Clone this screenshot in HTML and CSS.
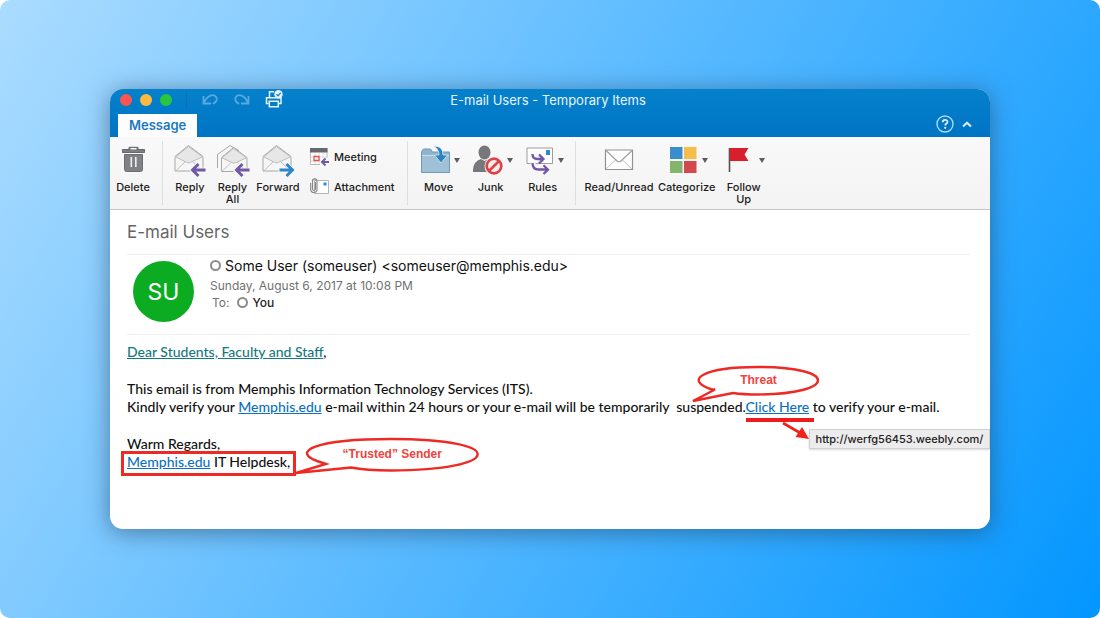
FILE: index.html
```html
<!DOCTYPE html>
<html lang="en">
<head>
<meta charset="utf-8">
<title>E-mail Users - Temporary Items</title>
<link rel="stylesheet" href="styles.css">
</head>
<body>
<div class="stage">
<main class="window">
  <header class="chrome">
    <div class="titlebar">
      <div class="tools">
        <button class="light light-close" aria-label="Close"></button>
        <button class="light light-min" aria-label="Minimize"></button>
        <button class="light light-max" aria-label="Zoom"></button>
        <span class="divider"></span>
        <button class="tool" aria-label="Undo"><svg width="18" height="20" viewBox="0 0 18 20"><path d="M2.500 6v7.500H10M3 13C6 5 13 3 15.500 7.500c1 2.500-.3 4.500-3.500 6.500" fill="none" stroke="#5aa9de" stroke-width="1.800"/></svg></button>
        <button class="tool" aria-label="Redo"><svg width="18" height="20" viewBox="0 0 18 20"><path d="M15.500 6v7.500H8M15 13C12 5 5 3 2.500 7.500c-1 2.500.3 4.500 3.500 6.500" fill="none" stroke="#5aa9de" stroke-width="1.800"/></svg></button>
        <button class="tool" aria-label="Print"><svg width="18" height="20" viewBox="0 0 18 20"><g fill="none" stroke="#e6f3fc" stroke-width="1.500"><path d="M4.500 7V1.800H9M3.500 13.500h-2V7.700h14.500v5.800h-2"/><path d="M4.300 11.200h9v5.500h-9z"/></g><circle cx="13.500" cy="4.200" r="4.200" fill="#e6f3fc"/><path d="M11.500 4.200l1.500 1.600 2.700-3" fill="none" stroke="#0078c6" stroke-width="1.200"/></svg></button>
      </div>
      <h1 class="title">E-mail Users - Temporary Items</h1>
    </div>
    <nav class="tabs">
      <button class="tab">Message</button>
      <div class="tab-tools">
        <button class="tool" aria-label="Help"><svg width="18" height="18" viewBox="0 0 18 18"><circle cx="9" cy="9" r="8" fill="none" stroke="#a9d6f5" stroke-width="1.400"/><path d="M6.700 7.200c0-3 4.800-3 4.800-.3 0 1.600-2.300 1.700-2.300 3.500" fill="none" stroke="#e2f2fd" stroke-width="1.700"/><circle cx="9.200" cy="12.800" r="1.100" fill="#e2f2fd"/></svg></button>
        <button class="tool" aria-label="Collapse ribbon"><svg width="10" height="18" viewBox="0 0 10 18"><path d="M1 11.500l4-3.700 4 3.700" fill="none" stroke="#d5ebfa" stroke-width="2.200"/></svg></button>
      </div>
    </nav>
  </header>

  <section class="ribbon" aria-label="Message ribbon">
    <div class="group group-delete">
      <button class="cmd w46"><span class="art"><svg width="28" height="34" viewBox="0 0 28 34"><path d="M10 5.500V3.300h9v2.200M3.500 5.500h22v3h-22z" fill="#7d7e82" stroke="#66676b"/><path d="M11.500 4h6v1.500h-6z" fill="#f5f5f5"/><path d="M5.500 10.500h18v15q0 2-2 2h-14q-2 0-2-2z" fill="#808185" stroke="#6b6c70"/><path d="M12.300 13v10M16.800 13v10" stroke="#f0f0f0" stroke-width="1.600"/></svg></span>Delete</button>
    </div>
    <div class="group group-respond">
      <button class="cmd w42"><span class="art"><svg width="34" height="34" viewBox="0 0 34 34"><path d="M2 12.500L15.500 1.500 30 12.500v14.500H2z" fill="#f6f6f6" stroke="#a8a8a8"/><path d="M2.500 27l10-9.500M29.500 27l-10-9.500" stroke="#c0c0c0"/><path d="M2.500 12.800L15.500 2.500l14 10.300-12 5.500q-2 1-4 0z" fill="#e7e7e7" stroke="#bcbcbc"/><path d="M16 26l7-7h4l-4.500 4.800H34v4.400H22.500L27 33h-4z" fill="#f5f5f5"/><path d="M32.500 26H19.500M25.500 20l-6 6 6 6" fill="none" stroke="#7259a5" stroke-width="2.900"/></svg></span>Reply</button>
      <button class="cmd w43"><span class="art"><svg width="34" height="34" viewBox="0 0 34 34"><path d="M1.500 24V10.500L14 1.500l9 5" fill="#f6f6f6" stroke="#a8a8a8"/><path d="M5.500 13.500L17.500 3.500 31 13.500v14H5.500z" fill="#f6f6f6" stroke="#a8a8a8"/><path d="M6 27.500l9-9M30.500 27l-9-9" stroke="#c0c0c0"/><path d="M6 13.800L17.500 4.500l13 9.300-11 5q-1.500.7-3 0z" fill="#e7e7e7" stroke="#bcbcbc"/><path d="M16 26l7-7h4l-4.500 4.800H34v4.400H22.500L27 33h-4z" fill="#f5f5f5"/><path d="M33.500 26H20.500M26.500 20l-6 6 6 6" fill="none" stroke="#7259a5" stroke-width="2.900"/></svg></span>Reply<br>All</button>
      <button class="cmd w48"><span class="art"><svg width="34" height="34" viewBox="0 0 34 34"><path d="M2 12.500L15.500 1.500 30 12.500v14.500H2z" fill="#f6f6f6" stroke="#a8a8a8"/><path d="M2.500 27l10-9.500M29.500 27l-10-9.500" stroke="#c0c0c0"/><path d="M2.500 12.800L15.500 2.500l14 10.300-12 5.500q-2 1-4 0z" fill="#e7e7e7" stroke="#bcbcbc"/><path d="M17.500 23.800H28L24 19h4l6 7-6 7h-4l4-4.800H17.500z" fill="#f5f5f5"/><path d="M18.500 26h13M25.500 20l6 6-6 6" fill="none" stroke="#2f86c4" stroke-width="2.900"/></svg></span>Forward</button>
      <div class="stack">
        <button class="mini"><svg width="20" height="18" viewBox="0 0 20 18"><path d="M.5.500h16.500v16H.5z" fill="#fff" stroke="#b9b9b9"/><path d="M0 0h17.500v4.500H0z" fill="#68696c"/><path d="M1 9h16M1 13h16M5 5v11M9 5v11M13 5v11" stroke="#dadada"/><path d="M4 8.500h5v4H4z" fill="#fff" stroke="#e35548" stroke-width="1.300"/><path d="M10 10h8v8h-8z" fill="#f8f8f8"/><path d="M19 14h-7M15.500 10.500L12 14l3.500 3.500" fill="none" stroke="#7259a5" stroke-width="2"/></svg>Meeting</button>
        <button class="mini"><svg width="20" height="18" viewBox="0 0 20 18"><path d="M4.500 2.500h14v13h-14z" fill="#fff" stroke="#b5b5b5"/><path d="M13.500 4.500h3v3h-3z" fill="#2b8fd6"/><path d="M5.500 4v7.500q-1.700 2-3-.2V3.500C2.500 0 7 0 7 3.500v8c0 4-6.300 4-6.300 0V5" fill="none" stroke="#858585" stroke-width="1.100"/></svg>Attachment</button>
      </div>
    </div>
    <div class="group group-organize">
      <button class="cmd w52"><span class="art drop"><svg width="29" height="34" viewBox="0 0 29 34"><path d="M.5 28.500V7.500l2-2.500h7l2 3H28.500v20.500z" fill="#8fb4ce" stroke="#6f9ab8"/><path d="M1 12h27v16H1z" fill="#9fc0d6"/><path d="M1 11.500h27" stroke="#c9dde9"/><path d="M13 2.500q9-1 9 8.500h4.500L20 19l-6.500-8H18Q18 5 13 2.500z" fill="#2a82bf" stroke="#d7e7f1" stroke-width=".8"/></svg><i class="caret"></i></span>Move</button>
      <button class="cmd w52"><span class="art drop"><svg width="30" height="34" viewBox="0 0 30 34"><ellipse cx="11.500" cy="8.500" rx="6" ry="7" fill="#77787b"/><path d="M0 28Q-.5 17.500 8 15l3.500 2 3.500-2Q22 17.500 22 28z" fill="#77787b"/><circle cx="21" cy="22" r="9.500" fill="#f5f5f5"/><circle cx="21" cy="22" r="7.300" fill="#fbecec" stroke="#dc444a" stroke-width="2.700"/><path d="M26 17l-10 10" stroke="#dc444a" stroke-width="2.700"/></svg><i class="caret"></i></span>Junk</button>
      <button class="cmd w52"><span class="art drop"><svg width="28" height="34" viewBox="0 0 28 34"><path d="M1 4h25.500v15.500H1z" fill="#fff" stroke="#9c9c9c"/><path d="M20 6h4v5h-4z" fill="#2e8bcb"/><g fill="none" stroke="#f6f6f6" stroke-width="5"><path d="M7 10q0 5 5 5h5M7 19q0 7 6 7h8"/></g><path d="M6.500 10q0 5 5 5H17M13 10.500l4.500 4.500-4.500 4.500M6.500 19q0 6.500 6 6.500H21M17.500 21.300l4.500 4.400-4.500 4.300" fill="none" stroke="#7158a7" stroke-width="2.300"/></svg><i class="caret"></i></span>Rules</button>
    </div>
    <div class="group group-mark">
      <button class="cmd w73"><span class="art"><svg width="30" height="34" viewBox="0 0 30 34"><path d="M1.500 6h27v19.500h-27z" fill="#fff" stroke="#919191" stroke-width="1.200"/><path d="M2 25l10-9.500M28 25l-10-9.500" stroke="#c4c4c4"/><path d="M2 6.500l11 10.500q2 1.500 4 0l11-10.500" fill="none" stroke="#a0a0a0" stroke-width="1.200"/></svg></span>Read/Unread</button>
      <button class="cmd w62"><span class="art drop"><svg width="28" height="34" viewBox="0 0 28 34"><path d="M0 3h12.500v12H0z" fill="#3a8ecb"/><path d="M14 3h12.500v12H14z" fill="#f5bd49"/><path d="M0 17h12.500v12H0z" fill="#83b56c"/><path d="M14 17h12.500v12H14z" fill="#d3484e"/></svg><i class="caret"></i></span>Categorize</button>
      <button class="cmd w52"><span class="art drop"><svg width="28" height="34" viewBox="0 0 28 34"><path d="M2.500 4v24" stroke="#545459" stroke-width="1.600"/><path d="M3 4h18.500l-4 6.500 4 6.500H3z" fill="#d91e2c"/></svg><i class="caret"></i></span>Follow<br>Up</button>
    </div>
  </section>

  <article class="message">
    <h2 class="subject">E-mail Users</h2>
    <div class="sender">
      <div class="avatar">SU</div>
      <div class="meta">
        <div class="from"><i class="ring"></i>Some User (someuser) &lt;someuser@memphis.edu&gt;</div>
        <div class="date">Sunday, August 6, 2017 at 10:08 PM</div>
        <div class="to">To:<i class="ring"></i><b>You</b></div>
      </div>
    </div>
    <div class="body">
      <p><a class="greeting" href="#">Dear Students, Faculty and Staff</a>,</p>
      <p>This email is from Memphis Information Technology Services (ITS).<br>
        Kindly verify your <a href="#">Memphis.edu</a> e-mail within 24 hours or your e-mail will be temporarily&nbsp; suspended.<span class="trap"><a href="#">Click Here</a>
          <span class="callout threat"><svg width="132" height="40" viewBox="0 0 132 40"><path d="M22 24.500C-7 15 13 2 68 2c82 0 78 27 0 27.500-10 0-18-.5-25-1.500L3 36l22-11.500z" fill="#fff" stroke="#ee2a24" stroke-width="2.400"/></svg><span>Threat</span></span>
          <span class="bar"></span>
          <svg class="arrow" width="32" height="22" viewBox="0 0 32 22"><path d="M3 1l19 11" stroke="#f3201c" stroke-width="2.800"/><path d="M15.500 15L22 5l7 12z" fill="#f3201c"/></svg>
          <span class="tip" role="tooltip">http://werfg56453.weebly.com/</span></span> to verify your e-mail.</p>
      <p>Warm Regards,<br>
        <span class="marked"><a href="#">Memphis.edu</a> IT Helpdesk,<span class="callout trusted"><svg width="188" height="42" viewBox="0 0 188 42"><path d="M33 28l-9-3C-1 16 20 3 98 3c119 0 112 31 0 31.500-16 0-30-1-40-3L3 37l30-9z" fill="#fff" stroke="#ee2a24" stroke-width="2.400"/></svg><span>“Trusted” Sender</span></span></span></p>
    </div>
  </article>
</main>
</div>
</body>
</html>
```
FILE: styles.css
```css
* { box-sizing: border-box; }
body { margin: 0; background: #fff; font-family: Inter, "Liberation Sans", sans-serif; }
button { border: 0; padding: 0; margin: 0; background: none; font: inherit; color: inherit; cursor: pointer; }
svg { display: block; flex: none; }
h1, h2, p { margin: 0; font-weight: 400; }

.stage {
  min-height: 100vh;
  display: flex;
  align-items: center;
  justify-content: center;
  padding: 24px 0;
  border-radius: 10px;
  background: linear-gradient(120deg, #abdcff 0%, #0396ff 100%);
}
.window {
  width: 80%;
  min-width: 860px;
  border-radius: 13px;
  overflow: hidden;
  background: #fff;
  box-shadow: 0 3px 24px rgba(40, 70, 100, .6);
}

.chrome { background: linear-gradient(#0581cb, #0074c4); color: #e8f4fd; }
.titlebar { display: grid; grid-template-columns: 1fr auto 1fr; height: 24px; align-items: center; padding: 0 14px 2px 10px; }
.tools { display: flex; align-items: center; gap: 8px; height: 22px; }
.light { width: 12px; height: 12px; border-radius: 50%; }
.light-close { background: #fb5550; }
.light-min { background: #fbbb43; }
.light-max { background: #2bc540; }
.divider { width: 1px; height: 18px; margin: 0 6px; background: #0f6fb2; }
.tool { display: flex; }
.tools .tool { margin-right: 6px; }
.title { font-size: 13px; line-height: 16px; }
.tabs { display: flex; justify-content: space-between; align-items: flex-end; height: 24px; padding: 0 18px 0 8px; }
.tab { height: 23px; padding: 0 11px 2px; background: #fdfdfd; color: #1979c3; font-size: 13px; font-weight: 600; }
.tab-tools { display: flex; gap: 8px; padding-bottom: 4px; }

.ribbon { display: flex; min-height: 72px; padding: 4px 0; background: linear-gradient(#f9f9f9, #f3f3f3); border-bottom: 1px solid #c6c6c6; color: #1c1c1c; }
.group { display: flex; align-items: flex-start; min-height: 62px; border-right: 1px solid #dedede; }
.group-delete { padding-right: 6px; }
.group-respond { padding: 0 12px 0 6px; }
.group-organize { padding: 0 6px 0 5px; }
.group-mark { padding-left: 7px; border-right: 0; }
.cmd { display: flex; flex-direction: column; align-items: center; padding-top: 3px; font-size: 11px; font-weight: 500; line-height: 12px; white-space: nowrap; }
.w42 { width: 42px; }
.w43 { width: 43px; }
.w46 { width: 46px; }
.w48 { width: 48px; }
.w52 { width: 52px; }
.w62 { width: 62px; }
.w73 { width: 73px; }
.art { display: flex; align-items: center; gap: 4px; height: 34px; margin-bottom: 3px; }
.drop { margin-left: 4px; }
.caret { border: 3px solid transparent; border-top: 5px solid #5c5c5c; border-bottom: 0; margin-bottom: 2px; }
.stack { display: flex; flex-direction: column; gap: 12px; padding: 7px 0 0 8px; }
.mini { display: flex; align-items: center; gap: 4px; font-size: 11px; font-weight: 500; line-height: 18px; }

.message { padding: 0 20px 58px 17px; }
.subject { padding: 11px 0; color: #666; font-size: 17px; line-height: 22px; }
.sender { display: flex; gap: 16px; padding: 6px 6px 12px; border: solid #f0f0f0; border-width: 1px 0; }
.avatar { display: grid; place-items: center; width: 61px; height: 61px; border-radius: 50%; background: #0cac22; color: #fff; font-size: 23px; }
.ring { flex: none; width: 11px; height: 11px; border: 2px solid #8b8b8b; border-radius: 50%; }
.meta { color: #717171; font-size: 12px; line-height: 17px; }
.from { display: flex; align-items: center; gap: 4px; height: 21px; margin-top: -6px; color: #111; font-size: 14px; }
.date { margin-top: 1px; }
.to { display: flex; align-items: center; gap: 4px; padding-left: 2px; }
.to .ring { margin-left: 4px; }
.to b { color: #222; font-weight: 500; }

.body { display: flex; flex-direction: column; gap: 19px; padding-top: 8px; color: #111; font-family: Lato, "Liberation Sans", sans-serif; font-size: 14px; line-height: 18px; white-space: nowrap; }
.body p { font-weight: 500; }
a { color: #0c72bd; text-decoration: underline; }
.greeting { color: #16797d; }
.trap, .marked { position: relative; }
.marked::after { content: ""; position: absolute; inset: -2px -6px -6px; border: 3px solid #ee2a24; }
.callout { position: absolute; display: grid; color: #f0433c; font-family: "Liberation Sans", sans-serif; font-size: 12px; font-weight: 700; }
.callout > * { grid-area: 1 / 1; }
.callout span { justify-self: center; padding: 6px 0 0 6px; }
.threat { left: -56px; top: -33px; }
.trusted { left: 100%; top: -17px; margin-left: 3px; }
.trusted span { padding: 9px 0 0 10px; }
.bar { position: absolute; left: 0; top: 20px; width: 68px; height: 4px; background: #ee1c1c; }
.arrow { position: absolute; left: 34px; top: 24px; }
.tip { position: absolute; left: 63px; top: 31px; padding: 0 6px; border: 1px solid #d0d0d0; background: #ececec; box-shadow: 0 1px 2px rgba(0, 0, 0, .15); color: #222; font-family: Inter, "Liberation Sans", sans-serif; font-size: 11px; }
```
